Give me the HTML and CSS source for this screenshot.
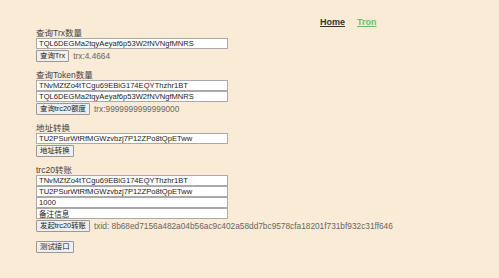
FILE: index.html
```html
<!DOCTYPE html>
<html lang="zh">
<head>
    <meta charset="UTF-8">
    <meta name="viewport" content="width=device-width, initial-scale=1.0">
    <title>Tron</title>
    <link rel="stylesheet" href="styles.css">
</head>
<body>
    <div class="nav">
        <a href="#" class="nav-home">Home</a>
        <a href="#" class="nav-tron">Tron</a>
    </div>
    <div class="main">
        <div class="block">
            <div class="label">查询Trx数量</div>
            <input type="text" class="field" value="TQL6DEGMa2tqyAeyaf6p53W2fNVNgfMNRS">
            <div class="row">
                <button>查询Trx</button>
                <span class="result">trx:4.4664</span>
            </div>
        </div>
        <div class="block">
            <div class="label">查询Token数量</div>
            <input type="text" class="field" value="TNvMZfZo4tTCgu69EBiG174EQYThzhr1BT">
            <input type="text" class="field" value="TQL6DEGMa2tqyAeyaf6p53W2fNVNgfMNRS">
            <div class="row">
                <button>查询trc20额度</button>
                <span class="result">trx:9999999999999000</span>
            </div>
        </div>
        <div class="block">
            <div class="label">地址转换</div>
            <input type="text" class="field" value="TU2PSurWtRfMGWzvbzj7P12ZPo8tQpETww">
            <div class="row">
                <button>地址转换</button>
            </div>
        </div>
        <div class="block">
            <div class="label">trc20转账</div>
            <input type="text" class="field" value="TNvMZfZo4tTCgu69EBiG174EQYThzhr1BT">
            <input type="text" class="field" value="TU2PSurWtRfMGWzvbzj7P12ZPo8tQpETww">
            <input type="text" class="field" value="1000">
            <input type="text" class="field" value="备注信息">
            <div class="row">
                <button>发起trc20转账</button>
                <span class="result">txid: 8b68ed7156a482a04b56ac9c402a58dd7bc9578cfa18201f731bf932c31ff646</span>
            </div>
        </div>
        <div class="block">
            <div class="row">
                <button>测试接口</button>
            </div>
        </div>
    </div>
</body>
</html>
```

FILE: styles.css
```css
body {
    margin: 0;
    background-color: #faebd7;
    font-family: "Liberation Sans", "Noto Sans CJK SC", sans-serif;
    font-size: 8px;
    color: #333;
}
.nav {
    display: flex;
    gap: 12px;
    padding: 17px 0 0 320px;
    height: 11px;
    font-size: 9px;
    font-weight: bold;
}
.nav a {
    line-height: 11px;
}
.nav-home {
    color: #333;
}
.nav-tron {
    color: #6abf6a;
}
.main {
    padding-left: 36px;
    display: flex;
    flex-direction: column;
    gap: 8px;
}
.block {
    display: flex;
    flex-direction: column;
    align-items: flex-start;
}
.label {
    font-size: 8.5px;
    line-height: 10px;
    color: #444;
}
.field {
    box-sizing: border-box;
    width: 192px;
    height: 11px;
    margin: 0;
    padding: 0 2px;
    border: 1px solid #aaa;
    background: #fff;
    font-family: "Liberation Sans", "Noto Sans CJK SC", sans-serif;
    font-size: 7.6px;
    color: #222;
}
.row {
    display: flex;
    align-items: center;
    gap: 4px;
    margin-top: 1px;
}
button {
    box-sizing: border-box;
    height: 12px;
    margin: 0;
    padding: 0 3px;
    border: 1px solid #999;
    border-radius: 1px;
    background: #efefef;
    font-family: "Liberation Sans", "Noto Sans CJK SC", sans-serif;
    font-size: 7.4px;
    line-height: 10px;
    color: #222;
}
.result {
    font-size: 8.3px;
    color: #666;
}
```
